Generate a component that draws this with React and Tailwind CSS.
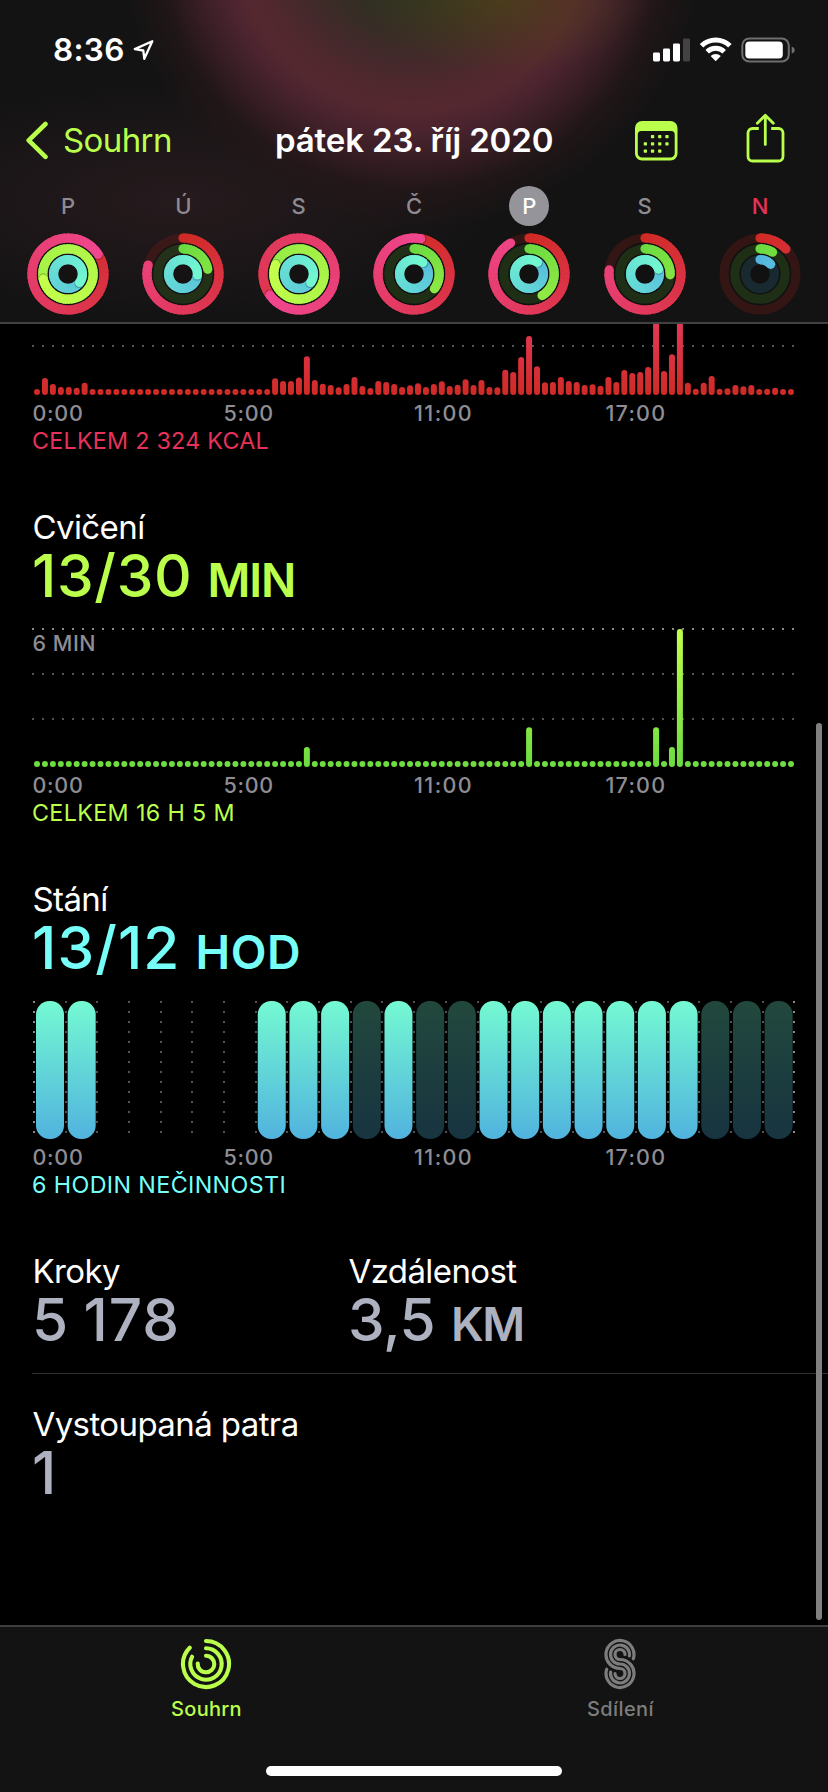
const RINGS = {
  move: { from: [208, 42, 36], to: [240, 70, 142], track: '#d22c28', r: 36 },
  exercise: { from: [107, 218, 64], to: [196, 255, 76], track: '#5fbf30', r: 25.2 },
  stand: { from: [84, 180, 222], to: [114, 248, 208], track: '#3f9fc0', r: 14.4 },
};

const DAYS = [
  { label: 'P', values: [1.158, 2.717, 1.35] },
  { label: 'Ú', values: [0.79, 0.22, 1.26] },
  { label: 'S', values: [1.65, 1.81, 1.35] },
  { label: 'Č', values: [1.03, 0.35, 1.105] },
  { label: 'P', values: [0.915, 0.413, 1.1], selected: true },
  { label: 'S', values: [0.768, 0.255, 1.195] },
  { label: 'N', values: [0.128, 0.083, 0.133], today: true },
];

const MOVE = [
  6, 17, 11, 8, 8, 7.3, 12.3, 6, 6, 6, 6, 6, 6, 6, 6, 6, 6, 6, 6, 6, 6, 6, 6, 6, 6, 6, 6, 6, 6, 6,
  16.7, 14, 14, 17.5, 38.7, 15, 11.3, 10, 7.7, 11, 18, 9, 7, 14, 13, 11, 8, 9.7,
  11.7, 8, 11, 13.7, 9, 10.3, 15.7, 10, 15, 8, 7.7, 25.3, 23, 38, 59, 28.7, 12.7, 13, 18, 14, 13, 10, 10.7, 9.3,
  18, 13, 25, 22, 23, 28, 100, 24, 40.7, 120, 12.3, 6.3, 12.3, 19, 6.3, 6.7, 10, 8.7, 10, 6, 6.3, 7.3, 6, 6,
];

const EXERCISE = Array.from({ length: 96 }, (_, i) => ({ 34: 20, 62: 39.7, 78: 39.7, 80: 20, 81: 138 })[i] || 6);

const STAND = '110000011121221111111222';

const mix = (a, b, t) => `rgb(${a.map((v, i) => Math.round(v + (b[i] - v) * t)).join(',')})`;

function Ring({ kind, value }) {
  const { from, to, track, r } = RINGS[kind];
  const start = Math.max(0, value - 1);
  const span = Math.max(1, value);
  const steps = Math.max(4, Math.round((value - start) * 60));
  const at = (t) => {
    const a = t * Math.PI * 2;
    return [41 + r * Math.sin(a), 41 - r * Math.cos(a)];
  };
  const segments = Array.from({ length: steps }, (_, i) => {
    const t0 = start + ((value - start) * i) / steps;
    const t1 = start + ((value - start) * (i + 1)) / steps;
    const [x0, y0] = at(i === 0 ? t0 : t0 - 0.012);
    const [x1, y1] = at(t1);
    return <path key={i} d={`M${x0} ${y0}A${r} ${r} 0 0 1 ${x1} ${y1}`} stroke={mix(from, to, t1 / span)} />;
  });
  const [sx, sy] = at(start);
  const [ex, ey] = at(value);
  const [hx, hy] = at(value + 0.2 / r);
  return (
    <g fill="none" strokeWidth="9.2">
      <circle cx="41" cy="41" r={r} stroke={track} strokeOpacity="0.18" />
      {value <= 1 && <circle cx={sx} cy={sy} r="4.6" fill={mix(from, to, 0)} />}
      {segments}
      {value > 1 && <circle cx={hx} cy={hy} r="4.6" fill="#000" fillOpacity="0.22" />}
      <circle cx={ex} cy={ey} r="4.6" fill={mix(from, to, value / span)} />
    </g>
  );
}

function Day({ day }) {
  return (
    <div className="flex w-[82px] flex-col items-center gap-[7px]">
      <div
        className={
          'flex size-10 items-center justify-center rounded-full text-[22px] font-medium ' +
          (day.selected ? 'bg-[#96949b] text-white' : day.today ? 'text-[#e6325a]' : 'text-[#8e8b92]')
        }
      >
        {day.label}
      </div>
      <svg width="82" height="82" viewBox="0 0 82 82">
        <circle cx="41" cy="41" r="40.6" fill="#0b0b0b" fillOpacity="0.25" />
        <Ring kind="move" value={day.values[0]} />
        <Ring kind="exercise" value={day.values[1]} />
        <Ring kind="stand" value={day.values[2]} />
      </svg>
    </div>
  );
}

function StatusBar() {
  return (
    <div className="flex h-[99px] items-center justify-between pl-[53px] pr-[33px]">
      <div className="flex items-center gap-[8px]">
        <span className="text-[31.5px] leading-none font-semibold tracking-[0.3px]">8:36</span>
        <svg width="22" height="24" viewBox="0 0 22 24" fill="none">
          <path d="M19.3 3.200L1.800 11.100l8.500 1.400 1 8.300z" stroke="#fff" strokeWidth="2.3" strokeLinejoin="round" />
        </svg>
      </div>
      <svg width="142" height="26" viewBox="0 0 142 26">
        <g fill="#fff">
          <rect x="0" y="15.5" width="7" height="9" rx="1.4" />
          <rect x="10" y="11.5" width="7" height="13" rx="1.4" />
          <rect x="20" y="6.5" width="7" height="18" rx="1.4" />
          <rect x="30" y="1.5" width="7" height="23" rx="1.4" fill="#454243" />
        </g>
        <g fill="none" stroke="#fff" strokeWidth="5">
          <path d="M48.5 8.8a20.3 20.3 0 0 1 28.4 0" />
          <path d="M54.2 14.7a12.2 12.2 0 0 1 17 0" />
        </g>
        <path d="M62.7 24.3l-5.1-5.2a7.3 7.3 0 0 1 10.2 0z" fill="#fff" />
        <rect x="89.3" y="1.4" width="46.500" height="23.2" rx="7" fill="none" stroke="#6f6f6f" strokeWidth="2" />
        <rect x="92.3" y="4.5" width="37.500" height="17" rx="4" fill="#fff" />
        <path d="M138.700 9.4c1.9.7 3 2 3 3.6s-1.100 2.900-3 3.600z" fill="#6f6f6f" />
      </svg>
    </div>
  );
}

function NavBar() {
  return (
    <div className="flex h-[80px] items-center pt-[2px] pr-[43px] pl-[25px] text-[#baff4b]">
      <svg width="25" height="40" viewBox="0 0 25 40" fill="none">
        <path d="M20.500 4L3.700 20.300l16.800 16.500" stroke="currentColor" strokeWidth="4.600" strokeLinecap="round" strokeLinejoin="round" />
      </svg>
      <span className="ml-[13px] w-[212px] text-[33px] leading-none tracking-[-0.600px]">Souhrn</span>
      <h1 className="w-[360px] text-[33px] leading-none font-semibold tracking-[-0.120px] whitespace-nowrap text-white">
        pátek 23. říj 2020
      </h1>
      <svg className="mt-px" width="43" height="40" viewBox="0 0 43 40">
        <path
          fill="currentColor"
          fillRule="evenodd"
          d="M7 0h28.500a7 7 0 0 1 7 7v25.500a7 7 0 0 1-7 7H7a7 7 0 0 1-7-7V7a7 7 0 0 1 7-7zM2.800 13.500v18.700a4.300 4.300 0 0 0 4.300 4.300h28.300a4.300 4.300 0 0 0 4.300-4.300V13.500a3.500 3.500 0 0 0-3.500-3.500H6.300a3.500 3.500 0 0 0-3.500 3.500z"
        />
        <g fill="currentColor">
          {[[1, 0], [2, 0], [3, 0], [0, 1], [1, 1], [2, 1], [3, 1], [0, 2], [1, 2], [2, 2]].map(([c, r]) => (
            <rect key={`${c}${r}`} x={8.7 + c * 7.200} y={14 + r * 7.200} width="3.300" height="3.300" rx="0.700" />
          ))}
        </g>
      </svg>
      <svg className="mt-[-4px] ml-auto" width="39" height="50" viewBox="0 0 39 50" fill="none">
        <g stroke="currentColor" strokeWidth="2.800" strokeLinecap="round" strokeLinejoin="round">
          <path strokeLinecap="butt" d="M12.800 15.500H6.500a4.500 4.500 0 0 0-4.500 4.500v23.500A4.500 4.500 0 0 0 6.500 48h26a4.500 4.500 0 0 0 4.500-4.500V20a4.500 4.500 0 0 0-4.500-4.500h-7.300" />
          <path d="M19.300 31.500V2.500M11.300 10.300l8-8 8 8" />
        </g>
      </svg>
    </div>
  );
}

function Header() {
  return (
    <header className="h-[324px] shrink-0 border-b-2 border-[#414042] bg-[#131313] bg-[radial-gradient(ellipse_140px_75px_at_505px_0px,#54481499_0%,#54481400_100%),radial-gradient(circle_at_412px_-65px,#2b3122_60px,#362d25_95px,#43292b_125px,#50282e_155px,#55282f_175px,#4b242f_195px,#371d24_225px,#251719b3_255px,#1c141600_295px),radial-gradient(ellipse_330px_120px_at_180px_200px,#261a1d_0%,#13131300_100%)]">
      <StatusBar />
      <NavBar />
      <div className="flex justify-between pt-[7px] pr-[27px] pl-[27px]">
        {DAYS.map((day, i) => (
          <Day key={i} day={day} />
        ))}
      </div>
    </header>
  );
}

function Dots({ y, color }) {
  return Array.from({ length: 77 }, (_, i) => <rect key={i} x={i * 10} y={y} width="2" height="2" fill={color} />);
}

function BarChart({ id, values, height, from, to, lines }) {
  return (
    <svg className="block" width="764" height={height} viewBox={`0 0 764 ${height}`}>
      <defs>
        <linearGradient id={id} gradientUnits="userSpaceOnUse" x1="0" x2="0" y1={height} y2={height - 138}>
          <stop offset="0" stopColor={from} />
          <stop offset="1" stopColor={to} />
        </linearGradient>
      </defs>
      {lines.map(([y, color]) => (
        <Dots key={y} y={height - y} color={color} />
      ))}
      {values.map((v, i) => (
        <rect key={i} x={2 + i * 7.937} y={height - v} width="6" height={v} rx="3" fill={`url(#${id})`} />
      ))}
    </svg>
  );
}

function StandChart() {
  return (
    <svg className="block" width="764" height="138" viewBox="0 0 764 138">
      <defs>
        <linearGradient id="stand" x1="0" x2="0" y1="0" y2="1">
          <stop offset="0" stopColor="#74f9d2" />
          <stop offset="1" stopColor="#51b3de" />
        </linearGradient>
      </defs>
      {Array.from({ length: 25 }, (_, c) =>
        Array.from({ length: 14 }, (_, r) => (
          <rect
            key={`${c}-${r}`}
            x={Math.round(1 + c * 31.680)}
            y={r * 10}
            width="2"
            height="2"
            fill={c === 0 || c === 24 ? '#8b8b8b' : '#525252'}
          />
        )),
      )}
      {[...STAND].map((s, i) =>
        s === '0' ? null : (
          <rect key={i} x={4 + i * 31.680} y="0" width="28" height="138" rx="13.500" fill="url(#stand)" opacity={s === '2' ? 0.29 : 1} />
        ),
      )}
    </svg>
  );
}

function Axis() {
  return (
    <div className="mt-[7px] flex h-6 items-center pl-[0.5px] text-[21.500px] leading-none font-medium tracking-[0.700px] text-[#8e8d93]">
      <span className="w-[191px]">0:00</span>
      <span className="w-[190.500px]">5:00</span>
      <span className="w-[191.500px] tracking-[1.400px]">11:00</span>
      <span className="tracking-[1.200px]">17:00</span>
    </div>
  );
}

function Caption({ className, children }) {
  return <div className={'mt-px mb-[55px] flex h-[27px] items-center text-[23.300px] leading-none ' + className}>{children}</div>;
}

function Metric({ title, value, unit, className, unitClassName }) {
  return (
    <div>
      <div className="flex h-9 items-center pl-[0.5px] text-[33px] leading-none tracking-[-0.600px] text-white">{title}</div>
      <div className={'flex h-[62px] items-baseline pt-[2px] text-[58.500px] leading-[58px] font-medium ' + className}>
        <span>{value}</span>
        {unit && <span className={'text-[46.500px] leading-none font-semibold ' + unitClassName}>{unit}</span>}
      </div>
    </div>
  );
}

function TabBar() {
  return (
    <footer className="flex h-[167px] shrink-0 flex-col items-center border-t-2 border-[#3e3e3e] bg-[#131313]">
      <div className="grid w-full grid-cols-2 text-[20px] leading-none font-medium tracking-[0.300px]">
        <div className="flex flex-col items-center pt-[11px] pr-[2px] text-[#baff4b]">
          <svg width="52" height="52" viewBox="0 0 52 52" fill="none" stroke="currentColor" strokeWidth="4.100" strokeLinecap="round">
            <path d="M26 3A23 23 0 1 1 9.740 9.740" />
            <path d="M26 10.300A15.700 15.700 0 1 1 12.100 18.700" />
            <path d="M26 17.700A8.300 8.300 0 1 1 17.700 25.500" />
          </svg>
          <span className="mt-[9px] pl-px">Souhrn</span>
        </div>
        <div className="flex flex-col items-center pt-[11px] pr-[2px] text-[#7c7c7c]">
          <svg width="32" height="52" viewBox="0 0 32 52" fill="none" stroke="currentColor" strokeWidth="3.200" strokeLinecap="round">
            <path d="M29.300 20.800A14 14 0 1 0 16 30.500A5 5 0 1 1 11 35.500" />
            <path d="M25.400 18A9.500 9.500 0 1 0 16 26A9.500 9.500 0 1 1 6.600 34" />
            <path d="M21 16.500A5 5 0 1 0 16 21.500A14 14 0 1 1 2.700 31.200" />
          </svg>
          <span className="mt-[9px] pl-px tracking-[0.400px]">Sdílení</span>
        </div>
      </div>
      <div className="mt-[47px] h-[10px] w-[296px] rounded-full bg-white" />
    </footer>
  );
}

export default function App() {
  return (
    <div className="relative flex h-[1792px] w-[828px] flex-col overflow-hidden bg-black font-['Inter','Liberation_Sans',sans-serif] text-white">
      <Header />
      <main className="flex-1 overflow-hidden pl-8">
        <BarChart id="move" values={MOVE} height={71} from="#d02a26" to="#f24783" lines={[[50, '#525252']]} />
        <Axis />
        <Caption className="tracking-[0.250px] text-[#e6325a]">CELKEM 2 324 KCAL</Caption>

        <Metric title="Cvičení" value="13/30" unit="MIN" className="tracking-[0.700px] text-[#baff4b]" unitClassName="ml-[15px] tracking-[-1.200px]" />
        <div className="relative pt-[20px]">
          <BarChart
            id="exercise"
            values={EXERCISE}
            height={140}
            from="#6ddb40"
            to="#c2ff4d"
            lines={[[139, '#8b8b8b'], [94, '#525252'], [49, '#525252']]}
          />
          <span className="absolute top-[25px] left-[0.500px] text-[21.500px] leading-[22px] font-medium tracking-[0.500px] text-[#8e8d93]">6 MIN</span>
        </div>
        <Axis />
        <Caption className="tracking-[0.350px] text-[#baff4b]">CELKEM 16 H 5 M</Caption>

        <Metric title="Stání" value="13/12" unit="HOD" className="tracking-[1.100px] text-[#76fff8]" unitClassName="ml-[15px] tracking-[0.600px]" />
        <div className="pt-[22px]">
          <StandChart />
        </div>
        <Axis />
        <Caption className="tracking-[0.380px] text-[#76fff8]">6 HODIN NEČINNOSTI</Caption>

        <div className="grid grid-cols-[316px_1fr] border-b border-[#2f2f31] pb-[22px]">
          <Metric title="Kroky" value="5 178" className="tracking-[0.900px] [word-spacing:-2px] text-[#aeb1bf]" />
          <Metric title="Vzdálenost" value="3,5" unit="KM" className="tracking-[-0.500px] text-[#aeb1bf]" unitClassName="ml-[16px] tracking-[-1.500px]" />
        </div>
        <div className="pt-8">
          <Metric title="Vystoupaná patra" value="1" className="text-[#aeb1bf]" />
        </div>
      </main>
      <TabBar />
      <div className="absolute top-[723px] left-[816px] h-[897px] w-[6px] rounded-full bg-[#808080]" />
    </div>
  );
}
